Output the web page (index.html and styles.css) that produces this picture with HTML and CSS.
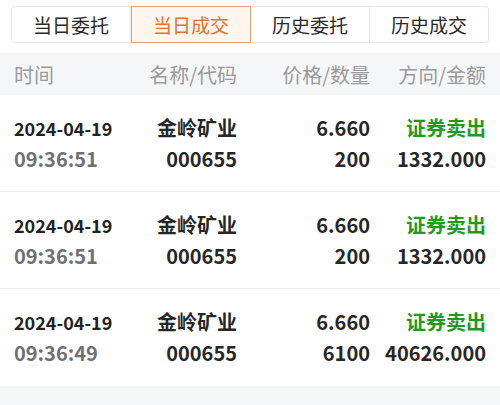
FILE: index.html
```html
<!DOCTYPE html>
<html>
<head>
    <title>当日成交</title>
    <link rel="stylesheet" href="styles.css">
</head>
<body>
    <div class="tabs">
        <div class="tab">当日委托</div>
        <div class="tab active">当日成交</div>
        <div class="tab">历史委托</div>
        <div class="tab">历史成交</div>
    </div>

    <div class="table-head">
        <div>时间</div>
        <div class="r">名称/代码</div>
        <div class="r">价格/数量</div>
        <div class="r">方向/金额</div>
    </div>

    <div class="rows">
        <div class="row">
            <div class="date">2024-04-19</div>
            <div class="r">金岭矿业</div>
            <div class="r">6.660</div>
            <div class="r sell">证券卖出</div>
            <div class="time">09:36:51</div>
            <div class="r">000655</div>
            <div class="r">200</div>
            <div class="r">1332.000</div>
        </div>
        <div class="row">
            <div class="date">2024-04-19</div>
            <div class="r">金岭矿业</div>
            <div class="r">6.660</div>
            <div class="r sell">证券卖出</div>
            <div class="time">09:36:51</div>
            <div class="r">000655</div>
            <div class="r">200</div>
            <div class="r">1332.000</div>
        </div>
        <div class="row">
            <div class="date">2024-04-19</div>
            <div class="r">金岭矿业</div>
            <div class="r">6.660</div>
            <div class="r sell">证券卖出</div>
            <div class="time">09:36:49</div>
            <div class="r">000655</div>
            <div class="r">6100</div>
            <div class="r">40626.000</div>
        </div>
    </div>
</body>
</html>
```

FILE: styles.css
```css
* { margin: 0; padding: 0; box-sizing: border-box; }
body { font-family: "Noto Sans CJK SC", "Noto Sans", sans-serif; background: #f5f6f8; color: #222; width: 500px; height: 405px; overflow: hidden; }

.tabs { display: flex; background: #fff; padding: 6px 11px 10px; }
.tab { flex: 1; height: 37px; display: flex; align-items: center; justify-content: center; font-size: 19px; color: #2a2a2a; border: 1px solid #e6e6e6; border-left: none; }
.tab:first-child { border-left: 1px solid #e6e6e6; border-radius: 4px 0 0 4px; }
.tab:last-child { border-radius: 0 4px 4px 0; }
.tab.active { background: #fff5ef; color: #e2722e; border: 1px solid #e3a57f; }

.table-head { display: grid; grid-template-columns: 100px 123px 133px 116px; padding: 0 14px; height: 42px; align-items: center; background: #f5f6f8; color: #9a9a9a; font-size: 20px; }
.r { text-align: right; }

.rows { background: #fff; }
.row { display: grid; grid-template-columns: 100px 123px 133px 116px; grid-auto-rows: 31px; align-items: center; padding: 17px 14px; border-bottom: 1px solid #efefef; font-size: 20px; font-weight: 700; color: #262626; }
.row:last-child { border-bottom: none; padding-bottom: 18px; }
.date { font-size: 18px; color: #222; white-space: nowrap; }
.time { font-size: 20px; color: #707070; }
.sell { color: #1f9a1f; }
```
